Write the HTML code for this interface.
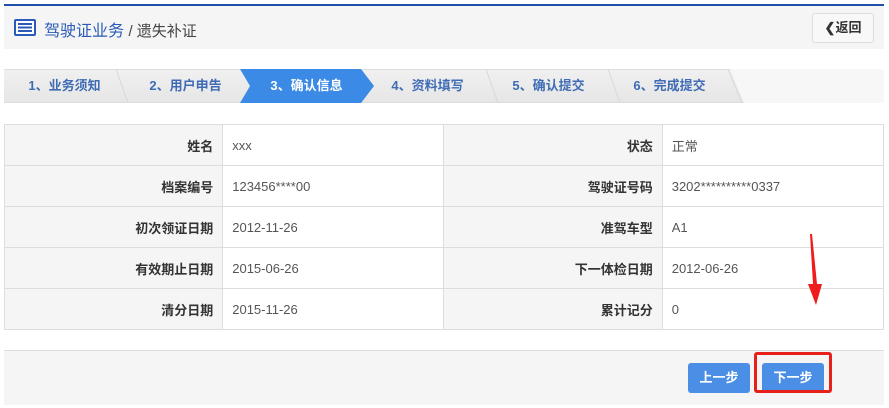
<!DOCTYPE html>
<html><head><meta charset="utf-8"><style>
*{margin:0;padding:0;box-sizing:border-box}
body{width:889px;height:408px;background:#fff;font-family:"Liberation Sans","Noto Sans CJK SC",sans-serif;position:relative;overflow:hidden}
.hdr{position:absolute;left:4px;top:4px;width:880px;height:45px;background:#f5f5f5;border-top:2px solid #1f4fa8}
.hdr .t{position:absolute;left:40px;top:11px;font-size:16px;color:#2a5bb8}
.hdr .t span{color:#444;font-size:15px}
.back{position:absolute;right:10px;top:7px;width:62px;height:30px;border:1px solid #ddd;background:#f8f8f8;border-radius:3px;font-size:13px;font-weight:bold;color:#333;text-align:center;line-height:28px}
.steps{position:absolute;left:4px;top:69px;width:880px;height:34px;background:linear-gradient(#f0f0f0,#e6e6e6);border-top:1px solid #ddd;border-bottom:1px solid #ddd}
.st{position:absolute;top:0;height:32px;line-height:32px;font-size:13px;font-weight:bold;color:#3f6cb5;width:121px;text-align:center}
.table{position:absolute;left:4px;top:124px;width:880px;border-collapse:collapse;font-size:13px}
.table td{border:1px solid #ddd;height:41px;padding:0 9px;color:#555}
.table td.l{background:#f5f5f5;text-align:right;color:#333;width:218px;font-weight:bold}
.table td.v{width:221px}
.foot{position:absolute;left:4px;top:350px;width:880px;height:55px;background:#f5f5f5;border-top:1px solid #ddd}
.btn{position:absolute;top:363px;width:62px;height:30px;background:#4a8ee6;border-radius:3px;color:#fff;font-size:13px;font-weight:bold;text-align:center;line-height:30px}
</style></head><body>
<div class="hdr">
<svg style="position:absolute;left:10px;top:13px" width="22" height="17" viewBox="0 0 22 17"><rect x="0" y="0" width="22" height="17" rx="2" fill="#2a5bb8"/><rect x="2" y="2" width="18" height="13" fill="#fff"/><rect x="4" y="4" width="14" height="2" fill="#2a5bb8"/><rect x="4" y="7.5" width="14" height="2" fill="#2a5bb8"/><rect x="4" y="11" width="14" height="2" fill="#2a5bb8"/></svg>
<div class="t">驾驶证业务 <span>/ 遗失补证</span></div>
<div class="back">&#10094;返回</div>
</div>
<div class="steps">
<svg style="position:absolute;left:0;top:-1px" width="880" height="34">
<polygon points="726,0 880,0 880,34 740,34 726,0" fill="#f7f7f7"/>
<g stroke="#d8d8d8" fill="none"><polyline points="112,0 124,34"/><polyline points="482,0 494,34"/><polyline points="604,0 616,34"/><polyline points="724,0 738,34"/></g>
<polygon points="236,0 357,0 370,17 357,34 236,34 246,17" fill="#3b8ae6"/>
</svg>
<div class="st" style="left:0">1、业务须知</div>
<div class="st" style="left:121px">2、用户申告</div>
<div class="st" style="left:242px;color:#fff">3、确认信息</div>
<div class="st" style="left:363px">4、资料填写</div>
<div class="st" style="left:484px">5、确认提交</div>
<div class="st" style="left:605px">6、完成提交</div>
</div>
<table class="table">
<tr><td class="l">姓名</td><td class="v">xxx</td><td class="l">状态</td><td class="v">正常</td></tr>
<tr><td class="l">档案编号</td><td class="v">123456****00</td><td class="l">驾驶证号码</td><td class="v">3202**********0337</td></tr>
<tr><td class="l">初次领证日期</td><td class="v">2012-11-26</td><td class="l">准驾车型</td><td class="v">A1</td></tr>
<tr><td class="l">有效期止日期</td><td class="v">2015-06-26</td><td class="l">下一体检日期</td><td class="v">2012-06-26</td></tr>
<tr><td class="l">清分日期</td><td class="v">2015-11-26</td><td class="l">累计记分</td><td class="v">0</td></tr>
</table>
<div class="foot"></div>
<div class="btn" style="left:688px">上一步</div>
<div class="btn" style="left:762px">下一步</div>
<div style="position:absolute;left:754px;top:352px;width:78px;height:41px;border:3px solid #e8201c;border-radius:3px"></div>
<svg style="position:absolute;left:800px;top:232px" width="30" height="76"><polygon points="10,2 12,2 17,52 22,52 16,73 8,52 13,52" fill="#ee1c1c"/></svg>
</body></html>
